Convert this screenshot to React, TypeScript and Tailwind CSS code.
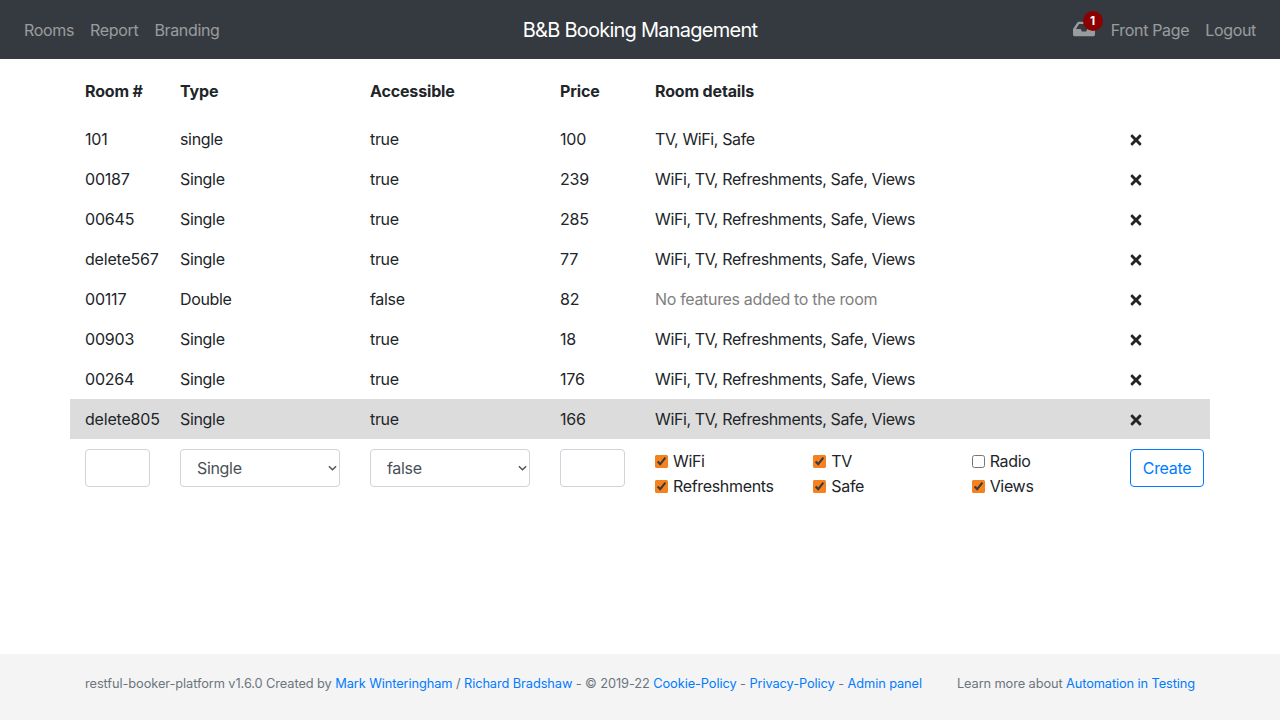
import { FaInbox, FaTimes } from "react-icons/fa";

const rooms = [
  { name: "101", type: "single", accessible: "true", price: "100", details: "TV, WiFi, Safe" },
  { name: "00187", type: "Single", accessible: "true", price: "239", details: "WiFi, TV, Refreshments, Safe, Views" },
  { name: "00645", type: "Single", accessible: "true", price: "285", details: "WiFi, TV, Refreshments, Safe, Views" },
  { name: "delete567", type: "Single", accessible: "true", price: "77", details: "WiFi, TV, Refreshments, Safe, Views" },
  { name: "00117", type: "Double", accessible: "false", price: "82", details: "" },
  { name: "00903", type: "Single", accessible: "true", price: "18", details: "WiFi, TV, Refreshments, Safe, Views" },
  { name: "00264", type: "Single", accessible: "true", price: "176", details: "WiFi, TV, Refreshments, Safe, Views" },
  { name: "delete805", type: "Single", accessible: "true", price: "166", details: "WiFi, TV, Refreshments, Safe, Views", hover: true },
];

const features = [
  { label: "WiFi", checked: true },
  { label: "TV", checked: true },
  { label: "Radio", checked: false },
  { label: "Refreshments", checked: true },
  { label: "Safe", checked: true },
  { label: "Views", checked: true },
];

function Row({ room }: { room: (typeof rooms)[number] }) {
  return (
    <div className={`grid grid-cols-12 h-10 items-center ${room.hover ? "bg-[#dcdcdc]" : ""}`}>
      <div className="col-span-1 pl-[15px] whitespace-nowrap tracking-[-0.2px]">{room.name}</div>
      <div className="col-span-2 pl-[15px]">{room.type}</div>
      <div className="col-span-2 pl-[15px]">{room.accessible}</div>
      <div className="col-span-1 pl-[15px] tracking-[-0.2px]">{room.price}</div>
      <div className={`col-span-5 pl-[15px] ${room.details ? "tracking-[-0.38px]" : "text-[#808080]"}`}>
        {room.details || "No features added to the room"}
      </div>
      <div className="col-span-1 pl-[15px]">
        <FaTimes className="-ml-[2px] mt-px text-[16px] text-[#212529]" />
      </div>
    </div>
  );
}

function Select({ value }: { value: string }) {
  return (
    <div className="relative">
      <select className="appearance-none w-full h-[38px] rounded border border-[#ced4da] bg-white pl-4 text-[#495057]">
        <option>{value}</option>
      </select>
      <svg viewBox="0 0 10 6" className="absolute right-[3px] top-[16px] w-[9px] h-[6px] pointer-events-none">
        <path d="M1 1l4 4 4-4" fill="none" stroke="#495057" strokeWidth="1.5" />
      </svg>
    </div>
  );
}

export default function App() {
  return (
    <div className="min-h-screen flex flex-col bg-white text-[16px] leading-6 tracking-[-0.33px] text-[#212529] font-['Inter','Liberation_Sans',sans-serif]">
      {/* navbar */}
      <nav className="relative h-[59px] shrink-0 bg-[#343a40] flex items-center justify-between px-4">
        <div className="flex text-white/50">
          <a className="px-2">Rooms</a>
          <a className="px-2">Report</a>
          <a className="px-2">Branding</a>
        </div>
        <div className="absolute left-0 right-0 text-center text-[20px] leading-[30px] text-white tracking-[-0.75px]">
          B&amp;B Booking Management
        </div>
        <div className="relative flex items-center text-white/50">
          <a className="relative px-2">
            <FaInbox className="-mt-[2px] text-[22px]" />
            <span className="absolute left-[18px] -top-[9px] w-5 h-5 rounded-full bg-[#8b0000] text-white text-[12px] leading-5 font-bold text-center tracking-normal">
              1
            </span>
          </a>
          <a className="px-2">Front Page</a>
          <a className="px-2">Logout</a>
        </div>
      </nav>

      <main className="w-[1140px] mx-auto pt-3">
        {/* table header */}
        <div className="grid grid-cols-12 h-10 items-center font-bold tracking-[-0.15px]">
          <div className="col-span-1 pl-[15px] whitespace-nowrap">Room #</div>
          <div className="col-span-2 pl-[15px]">Type</div>
          <div className="col-span-2 pl-[15px]">Accessible</div>
          <div className="col-span-1 pl-[15px]">Price</div>
          <div className="col-span-6 pl-[15px]">Room details</div>
        </div>
        <div className="mt-2">
          {rooms.map((room) => (
            <Row key={room.name} room={room} />
          ))}
        </div>

        {/* create form */}
        <div className="grid grid-cols-12 pt-[10px]">
          <div className="col-span-1 px-[15px]">
            <input className="w-full h-[38px] rounded border border-[#ced4da] bg-white" />
          </div>
          <div className="col-span-2 px-[15px]">
            <Select value="Single" />
          </div>
          <div className="col-span-2 px-[15px]">
            <Select value="false" />
          </div>
          <div className="col-span-1 px-[15px]">
            <input className="w-full h-[38px] rounded border border-[#ced4da] bg-white" />
          </div>
          <div className="col-span-5 grid grid-cols-3 content-start -mt-px">
            {features.map((f) => (
              <label key={f.label} className="flex items-center h-[25px] pl-[15px] gap-[5px] whitespace-nowrap">
                <input
                  type="checkbox"
                  defaultChecked={f.checked}
                  className="w-[13px] h-[13px] mt-[2px] accent-[#f5811f]"
                />
                {f.label}
              </label>
            ))}
          </div>
          <div className="col-span-1 pl-[15px]">
            <button className="h-[38px] w-[74px] rounded border border-[#007bff] text-[#007bff] bg-white">
              Create
            </button>
          </div>
        </div>
      </main>

      {/* footer */}
      <footer className="mt-auto h-[66px] bg-[#f4f4f4] text-[#6c757d] text-[12.8px] leading-[19px] tracking-[-0.1px]">
        <div className="w-[1140px] mx-auto px-[15px] pt-5 flex justify-between">
          <div className="tracking-[-0.085px]">
            restful-booker-platform v1.6.0 Created by <a className="text-[#007bff]">Mark Winteringham</a> /{" "}
            <a className="text-[#007bff]">Richard Bradshaw</a> - © 2019-22 <a className="text-[#007bff]">Cookie-Policy</a> -{" "}
            <a className="text-[#007bff]">Privacy-Policy</a> - <a className="text-[#007bff]">Admin panel</a>
          </div>
          <div>
            Learn more about <a className="text-[#007bff]">Automation in Testing</a>
          </div>
        </div>
      </footer>
    </div>
  );
}
